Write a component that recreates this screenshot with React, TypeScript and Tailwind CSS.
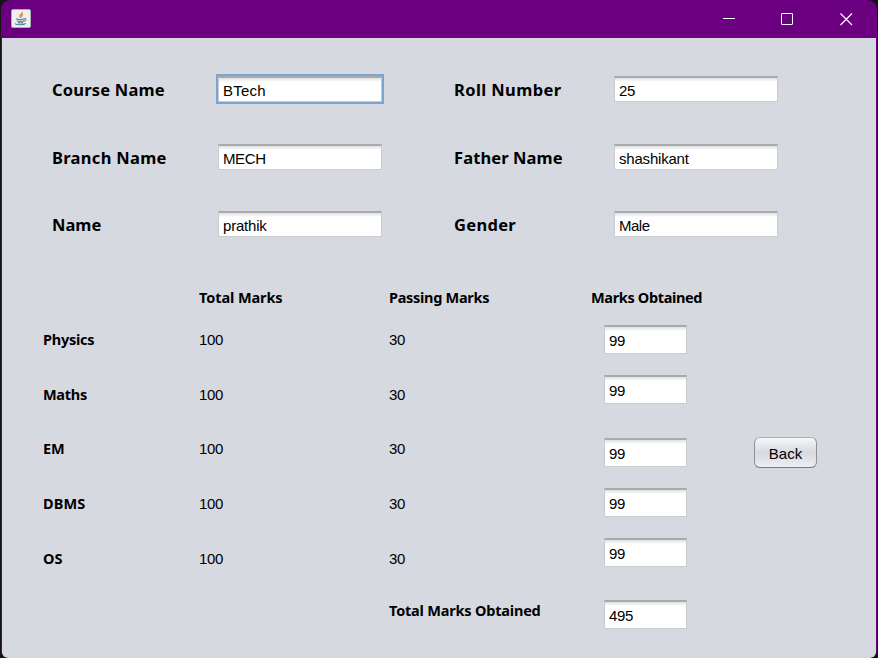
import type { ReactNode } from "react";

function Field({ value, focused = false, small = false, track = "tracking-normal" }: { value: string; focused?: boolean; small?: boolean; track?: string }) {
  return (
    <div
      className={`shrink-0 overflow-hidden border border-t-2 border-x-[#c9cbd0] border-b-[#cacccf] border-t-[#a8aaae] bg-white bg-linear-to-b from-[#dfe0e2] via-white via-[4px] to-white pl-1 font-['Liberation_Sans',Arial,sans-serif] text-[15px] whitespace-nowrap text-black ${
        small ? "h-[29px] w-[83px] leading-[28px] tracking-[-0.3px]" : "h-[26px] w-[164px] leading-[25px]"
      } ${small ? "" : track} ${focused ? "border-x-[#a9c4dd] outline-2 outline-[#7ba5cf]" : ""}`}
    >
      {value}
    </div>
  );
}

function FormLabel({ children, track }: { children: ReactNode; track: string }) {
  return (
    <div className={`h-[26px] font-['Noto_Sans','Open_Sans',sans-serif] text-[16.5px] leading-[28px] font-bold whitespace-nowrap ${track}`}>
      {children}
    </div>
  );
}

type Entry = { label: string; labelTrack: string; value: string; valueTrack: string };

function FormRow({ left, right, focused }: { left: Entry; right: Entry; focused?: boolean }) {
  return (
    <div className="grid h-[26px] grid-cols-[166px_236px_160px_164px] items-start">
      <FormLabel track={left.labelTrack}>{left.label}</FormLabel>
      <Field value={left.value} track={left.valueTrack} focused={focused} />
      <FormLabel track={right.labelTrack}>{right.label}</FormLabel>
      <Field value={right.value} track={right.valueTrack} />
    </div>
  );
}

const bold = "font-['Noto_Sans','Open_Sans',sans-serif] text-[14.5px] h-5 leading-[18px] font-bold whitespace-nowrap";
const num = "font-['Liberation_Sans',Arial,sans-serif] text-[15px] leading-5 tracking-[-0.3px] h-5";

const subjects: [string, string][] = [
  ["Physics", "tracking-[-0.25px]"],
  ["Maths", "tracking-[-0.3px]"],
  ["EM", "tracking-[0px]"],
  ["DBMS", "tracking-[0.1px]"],
  ["OS", "tracking-[0px]"],
];

function JavaIcon() {
  return (
    <svg width="20" height="20" viewBox="0 0 20 20" fill="none">
      <rect x="0.5" y="0.5" width="19" height="18" rx="1.5" fill="#edf0ef" stroke="#a9adb5" />
      <path d="M11.3 3c.5 2.2-3.3 2.5-2.5 4.3.3.7 1 .9 1 1.7M12 5.3c-1.6.8-1.7 1.4-.9 2.4" stroke="#e78a43" strokeWidth="1.4" />
      <path d="M5 9.8c2 .9 6.5.8 8.5 0M6 11.7c2 .8 5 .8 7 0M6.7 13.5c1.6.6 4 .6 5.5 0M13.3 9.5c2.2-.3 2 2-.5 2.9M3.8 14.6c2 1.5 8.5 1.4 11-.1" stroke="#577b9c" strokeWidth="1.1" />
    </svg>
  );
}

export default function App() {
  return (
    <div className="h-[658px] w-[878px] overflow-hidden bg-[#141216] text-black">
      <div className="ml-px flex h-[658px] w-[876px] flex-col overflow-hidden rounded-t-[9px] rounded-b-[7px] bg-[#6a007f]">
        <header className="flex h-[38px] shrink-0 items-center justify-between pr-[24px] pl-[10px]">
          <JavaIcon />
          <div className="flex items-center gap-[46px] text-white">
            <svg width="13" height="13" viewBox="0 0 13 13" fill="none" stroke="currentColor"><path d="M1 5.5h12" /></svg>
            <svg width="13" height="13" viewBox="0 0 13 13" fill="none" stroke="currentColor"><rect x="0.5" y="0.5" width="11" height="11" rx="0.5" /></svg>
            <svg width="13" height="13" viewBox="0 0 13 13" fill="none" stroke="currentColor"><path d="M0.5 0.5l11.5 11.5M12 0.5l-11.5 11.5" strokeWidth="1.2" /></svg>
          </div>
        </header>
        <main className="mx-px flex-1 overflow-hidden rounded-b-[6px] bg-[#d6d9e0]">
          <section className="flex flex-col gap-[41.5px] pt-[38px] pl-[50px]">
            <FormRow
              left={{ label: "Course Name", labelTrack: "tracking-[0.2px]", value: "BTech", valueTrack: "tracking-[0.2px]" }}
              right={{ label: "Roll Number", labelTrack: "tracking-[0.4px]", value: "25", valueTrack: "tracking-[-0.3px]" }}
              focused
            />
            <FormRow
              left={{ label: "Branch Name", labelTrack: "tracking-[0.3px]", value: "MECH", valueTrack: "tracking-[-0.4px]" }}
              right={{ label: "Father Name", labelTrack: "tracking-[0.1px]", value: "shashikant", valueTrack: "tracking-[-0.2px]" }}
            />
            <FormRow
              left={{ label: "Name", labelTrack: "tracking-[0px]", value: "prathik", valueTrack: "tracking-[-0.2px]" }}
              right={{ label: "Gender", labelTrack: "tracking-[0.3px]", value: "Male", valueTrack: "tracking-[-0.5px]" }}
            />
          </section>
          <section className="flex pt-[51px] pl-[41px]">
            <div className="flex w-[156px] flex-col gap-[34.7px] pt-[42px]">
              {subjects.map(([s, t]) => <div key={s} className={`${bold} ${t}`}>{s}</div>)}
            </div>
            <div className="w-[190px]">
              <div className={`${bold} tracking-[-0.1px]`}>Total Marks</div>
              <div className="mt-[22px] flex flex-col gap-[34.7px]">
                {subjects.map(([s]) => <div key={s} className={num}>100</div>)}
              </div>
            </div>
            <div className="w-[202px]">
              <div className={`${bold} tracking-[-0.3px]`}>Passing Marks</div>
              <div className="mt-[22px] flex flex-col gap-[34.7px]">
                {subjects.map(([s]) => <div key={s} className={num}>30</div>)}
              </div>
              <div className={`mt-[32px] ${bold} tracking-[-0.2px]`}>Total Marks Obtained</div>
            </div>
            <div className="w-[163px]">
              <div className={`${bold} tracking-[-0.35px]`}>Marks Obtained</div>
              <div className="flex flex-col pt-[17px] pl-[13px]">
                <Field small value="99" />
                <div className="mt-[21px]"><Field small value="99" /></div>
                <div className="mt-[34px]"><Field small value="99" /></div>
                <div className="mt-[21px]"><Field small value="99" /></div>
                <div className="mt-[21px]"><Field small value="99" /></div>
                <div className="mt-[33px]"><Field small value="495" /></div>
              </div>
            </div>
            <button className="mt-[149px] h-[31px] w-[63px] rounded-[6px] border-[1.5px] border-t-[#aeb0b5] border-x-[#8d9095] border-b-[#76797e] bg-linear-to-b from-[#f7f7f9] via-[#d6d9df] to-[#eceef2] pt-[3px] font-['Liberation_Sans',Arial,sans-serif] text-[15px] leading-[26px]">
              Back
            </button>
          </section>
        </main>
      </div>
    </div>
  );
}
